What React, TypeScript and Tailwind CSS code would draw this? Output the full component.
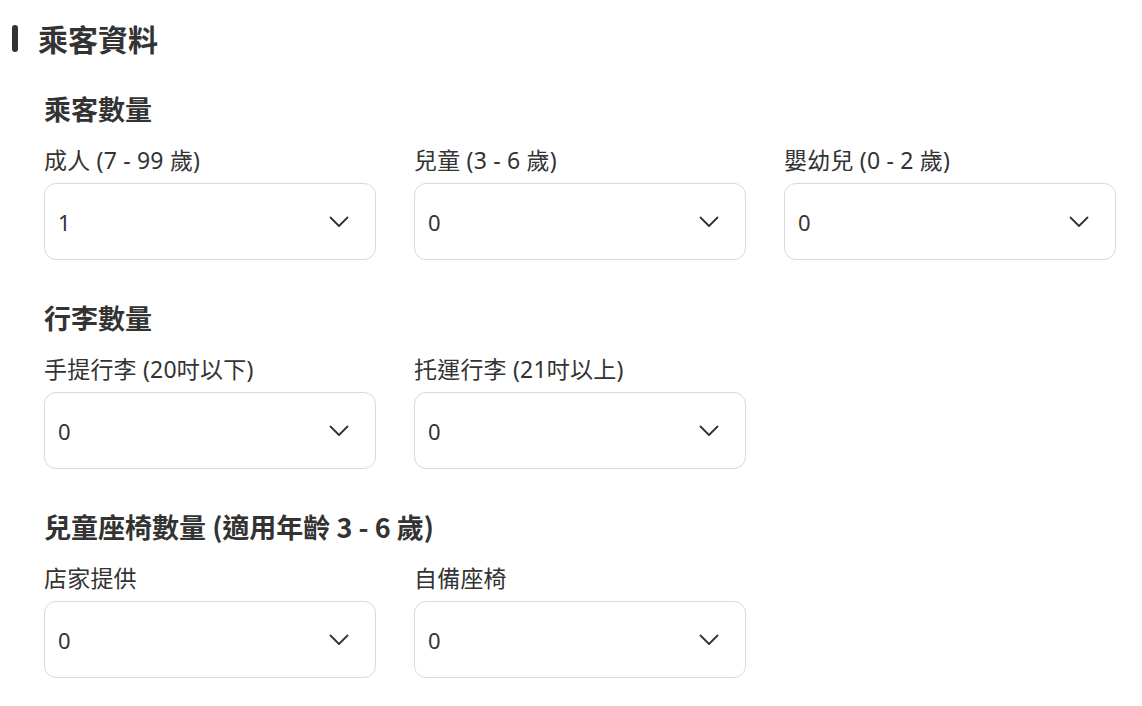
const cjk = { fontFamily: '"Noto Sans CJK TC", "Noto Sans", sans-serif' };
const mixed = { fontFamily: '"Noto Sans", "Noto Sans CJK TC", sans-serif' };

type Field = { label: string; value: string };
type Section = { title: string; fields: Field[] };

const sections: Section[] = [
  {
    title: "乘客數量",
    fields: [
      { label: "成人 (7 - 99 歲)", value: "1" },
      { label: "兒童 (3 - 6 歲)", value: "0" },
      { label: "嬰幼兒 (0 - 2 歲)", value: "0" },
    ],
  },
  {
    title: "行李數量",
    fields: [
      { label: "手提行李 (20吋以下)", value: "0" },
      { label: "托運行李 (21吋以上)", value: "0" },
    ],
  },
  {
    title: "兒童座椅數量 (適用年齡 3 - 6 歲)",
    fields: [
      { label: "店家提供", value: "0" },
      { label: "自備座椅", value: "0" },
    ],
  },
];

const Chevron = () => (
  <svg width="20" height="12" viewBox="0 0 20 12" fill="none" className="shrink-0">
    <polyline
      points="1.5,1.5 10,10 18.5,1.5"
      stroke="#333333"
      strokeWidth="1.8"
      strokeLinecap="round"
      strokeLinejoin="round"
    />
  </svg>
);

const SelectBox = ({ field }: { field: Field }) => (
  <div className="flex flex-col">
    <label className="text-[23px] leading-[30px] tracking-[0.2px] text-[#333333]" style={mixed}>
      {field.label}
    </label>
    <div className="mt-[8px] flex h-[77px] items-center justify-between rounded-[12px] border border-[#d9d9d9] bg-white pl-[13px] pr-[26px]">
      <span className="text-[22px] leading-[30px] text-[#333333]" style={mixed}>
        {field.value}
      </span>
      <Chevron />
    </div>
  </div>
);

export default function App() {
  return (
    <div className="min-h-screen bg-white pt-[18px]" style={cjk}>
      <div className="flex items-center pl-[12px]">
        <div className="h-[27px] w-[6px] rounded-full bg-[#333333]" />
        <h1 className="ml-[20px] text-[30px] font-bold leading-[40px] text-[#333333]">乘客資料</h1>
      </div>

      <div className="mt-[35px] w-[1072px] pl-[44px] box-content">
        {sections.map((s, i) => (
          <section key={s.title} className={i > 0 ? "mt-[42px]" : ""}>
            <h2 className="text-[27px] font-bold leading-[32px] text-[#333333]">{s.title}</h2>
            <div className="mt-[20px] grid grid-cols-3 gap-x-[38px]">
              {s.fields.map((f) => (
                <SelectBox key={f.label} field={f} />
              ))}
            </div>
          </section>
        ))}
      </div>
    </div>
  );
}
